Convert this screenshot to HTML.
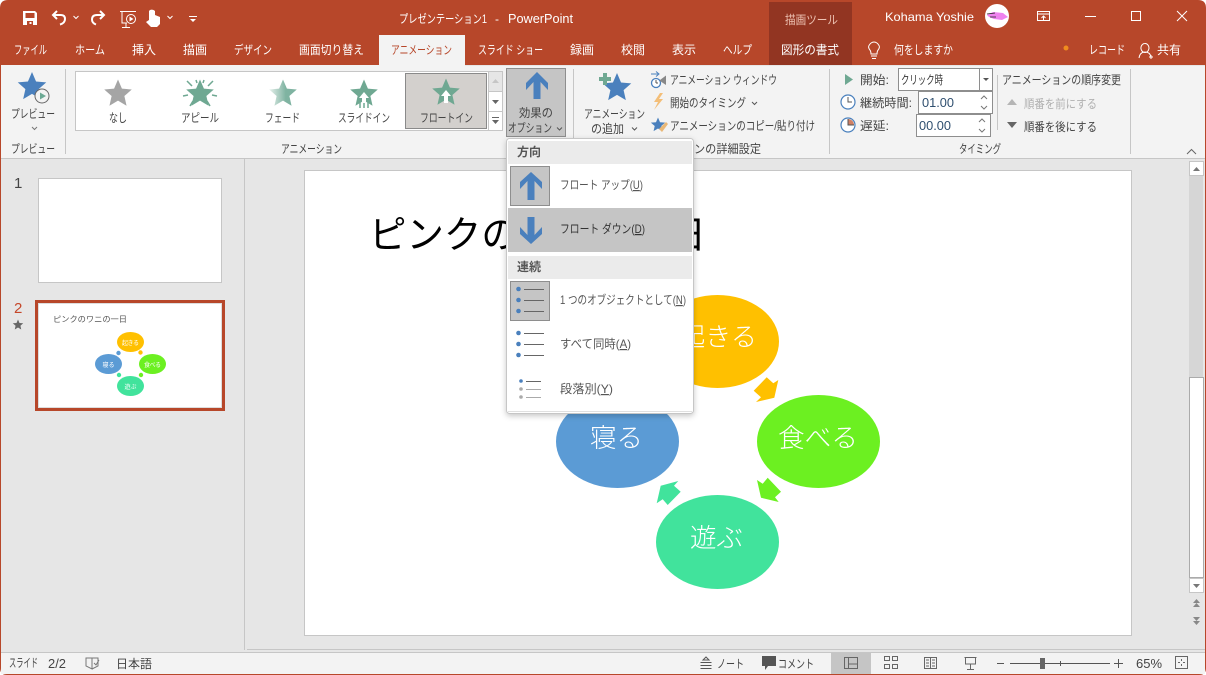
<!DOCTYPE html>
<html lang="ja"><head><meta charset="utf-8"><title>PowerPoint</title>
<style>
html,body{margin:0;padding:0;background:#fff;width:1206px;height:675px;overflow:hidden}
svg{display:block}
text{font-family:"Liberation Sans","Noto Sans CJK JP",sans-serif;font-size:12px;fill:#444;white-space:pre}
.w text,text.w{fill:#fff}
.u{text-decoration:underline}
</style></head><body>
<svg width="1206" height="675" viewBox="0 0 1206 675" xmlns="http://www.w3.org/2000/svg">
<defs>
<polygon id="s" points="0,-1 .27,-.37 .95,-.31 .44,.14 .59,.81 0,.46 -.59,.81 -.44,.14 -.95,-.31 -.27,-.37"/>
<linearGradient id="fade" x1="0" x2="1" y1="0" y2="0"><stop offset="0" stop-color="#e6f0ec"/><stop offset=".6" stop-color="#7fb3a1"/></linearGradient>
<filter id="sh" x="-10%" y="-10%" width="120%" height="120%"><feDropShadow dx="0" dy="2" stdDeviation="3" flood-color="#000" flood-opacity=".22"/></filter>
</defs>
<!-- window -->
<path d="M8 0H1198Q1206 0 1206 8V668Q1206 675 1199 675H7Q0 675 0 668V8Q0 0 8 0Z" fill="#B7472A"/>
<rect x="1" y="65" width="1204" height="609" fill="#E6E6E6"/>
<rect x="769" y="2" width="83" height="63" fill="#923522"/>
<!-- QAT -->
<path d="M23 11H35L37 13V25H23ZM25.500 13V18H34.500V13ZM27 21V25H33V21ZM29.500 22H31.500V24H29.500Z" fill="#fff" fill-rule="evenodd"/>
<g fill="none" stroke="#fff" stroke-width="2">
<path d="M54 15H61Q65 15 65 19Q65 23 60 24.500"/><path d="M57 11L53 15L57 19"/>
<path d="M103 15H97Q92 15 92 19.500Q92 23 96 24.500"/><path d="M100 11L104 15L100 19"/>
</g>
<g fill="none" stroke="#fff" stroke-width="1">
<path d="M120 11.500H136M122 12V23H127M126 23V27M122 27.500H130"/><circle cx="131" cy="19" r="4.500"/>
<path d="M73.500 16L76 18.500L78.500 16M167.500 16L170 18.500L172.500 16"/>
</g>
<path d="M129.500 16.500V21.500L133.500 19Z" fill="#fff"/>
<path d="M150 10Q153 9 155 11V15L160 17V24L157 27H151L146 22L149 20V11Z" fill="#fff"/>
<path d="M189 16H197V17H189ZM190 19H196L193 22Z" fill="#fff"/>
<!-- title text -->
<g class="w">
<text x="399" y="23" textLength="88" lengthAdjust="spacingAndGlyphs">プレゼンテーション1</text>
<text x="495" y="23">-</text>
<text x="508" y="23" textLength="65" lengthAdjust="spacingAndGlyphs" style="font-size:13px">PowerPoint</text>
<text x="785" y="24" textLength="53" lengthAdjust="spacingAndGlyphs" style="fill:#eec3b4">描画ツール</text>
<text x="885" y="21" textLength="89" lengthAdjust="spacingAndGlyphs">Kohama Yoshie</text>
</g>
<circle cx="997" cy="16" r="12" fill="#fff"/>
<path d="M987 15L993 12L1003 13L1008 17L1002 20L994 19L989 17Z" fill="#ee82ee"/>
<path d="M987 14L995 13M990 17H996" stroke="#222" stroke-width=".7" fill="none"/>
<g fill="none" stroke="#fff" stroke-width="1">
<rect x="1037.500" y="11.500" width="12" height="9"/><path d="M1037 14H1050M1043.500 20V16M1041.500 18L1043.500 16L1045.500 18"/>
<path d="M1085 16.500H1096"/><rect x="1131.500" y="11.500" width="9" height="9"/>
<path d="M1177 11L1187 21M1187 11L1177 21"/>
</g>
<!-- tabs -->
<rect x="379" y="35" width="86" height="31" fill="#F3F3F3"/>
<g class="w">
<text x="14" y="54" textLength="33" lengthAdjust="spacingAndGlyphs">ファイル</text>
<text x="75" y="54" textLength="30" lengthAdjust="spacingAndGlyphs">ホーム</text>
<text x="132" y="54" textLength="24" lengthAdjust="spacingAndGlyphs">挿入</text>
<text x="183" y="54" textLength="24" lengthAdjust="spacingAndGlyphs">描画</text>
<text x="234" y="54" textLength="38" lengthAdjust="spacingAndGlyphs">デザイン</text>
<text x="299" y="54" textLength="65" lengthAdjust="spacingAndGlyphs">画面切り替え</text>
<text x="478" y="54" textLength="65" lengthAdjust="spacingAndGlyphs">スライド ショー</text>
<text x="570" y="54" textLength="24" lengthAdjust="spacingAndGlyphs">録画</text>
<text x="621" y="54" textLength="24" lengthAdjust="spacingAndGlyphs">校閲</text>
<text x="672" y="54" textLength="24" lengthAdjust="spacingAndGlyphs">表示</text>
<text x="723" y="54" textLength="29" lengthAdjust="spacingAndGlyphs">ヘルプ</text>
<text x="781" y="54" textLength="58" lengthAdjust="spacingAndGlyphs">図形の書式</text>
<text x="894" y="54" textLength="59" lengthAdjust="spacingAndGlyphs">何をしますか</text>
<text x="1089" y="54" textLength="36" lengthAdjust="spacingAndGlyphs">レコード</text>
<text x="1157" y="54" textLength="24" lengthAdjust="spacingAndGlyphs">共有</text>
</g>
<text x="391" y="54" textLength="61" lengthAdjust="spacingAndGlyphs" style="fill:#B7472A">アニメーション</text>
<path d="M871 56H877M872 58.500H876M871 54Q871 51 869.500 49.500Q868 47 869 45.500Q871 42 874 42Q877 42 879 45.500Q880 47 878.500 49.500Q877 51 877 54Z" fill="none" stroke="#fff"/>
<circle cx="1066" cy="48" r="2.500" fill="#F08C1E"/>
<path d="M1139 58Q1140 52 1145 52Q1150 52 1151 57M1145 43.500A4 4.500 0 1 1 1144.900 43.500M1149 57H1153M1151 55V59" fill="none" stroke="#fff"/>
<!-- ribbon -->
<rect x="1" y="65" width="378" height="93" fill="#F3F3F3"/><rect x="379" y="66" width="826" height="92" fill="#F3F3F3"/>
<rect x="1" y="158" width="1204" height="1" fill="#C6C6C6"/>
<g fill="#C6C6C6"><rect x="65" y="69" width="1" height="85"/><rect x="573" y="69" width="1" height="85"/><rect x="829" y="69" width="1" height="85"/><rect x="1130" y="69" width="1" height="85"/><rect x="997" y="75" width="1" height="55"/></g>
<!-- preview -->
<use href="#s" transform="translate(32 87) scale(15)" fill="#4A80BD"/>
<circle cx="42" cy="96" r="7" fill="#F3F3F3" stroke="#666"/><path d="M40 92.500V99.500L46 96Z" fill="#6CA994"/>
<text x="11" y="118" textLength="44" lengthAdjust="spacingAndGlyphs">プレビュー</text>
<path d="M32 127L34.500 129.500L37 127" fill="none" stroke="#777"/>
<text x="11" y="153" textLength="44" lengthAdjust="spacingAndGlyphs">プレビュー</text>
<text x="281" y="153" textLength="61" lengthAdjust="spacingAndGlyphs">アニメーション</text>
<!-- gallery -->
<rect x="75.500" y="71.500" width="413" height="59" fill="#fff" stroke="#C6C6C6"/>
<rect x="405.500" y="73.500" width="81" height="55" fill="#D3D0CD" stroke="#8A8A8A"/>
<use href="#s" transform="translate(118 94) scale(14.500)" fill="#A5A5A5"/>
<use href="#s" transform="translate(200 94) scale(14.500)" fill="#6FA892"/>
<path d="M187 81L192 86M213 81L208 86M183 96L188 95M217 96L212 95M190 106L193 101M210 106L207 101M196 80L197 83M204 80L203 83" stroke="#6FA892" stroke-width="1.500" fill="none"/>
<use href="#s" transform="translate(283 94) scale(14.500)" fill="url(#fade)"/>
<use href="#s" transform="translate(364 94) scale(14.500)" fill="#6FA892"/>
<path d="M364 92L359 98H362V108H366V98H369Z" fill="#fff"/>
<path d="M360 102V108M364 103V108M368 102V108" stroke="#6FA892" stroke-width="1.500"/>
<use href="#s" transform="translate(446 93) scale(14.500)" fill="#6FA892"/>
<path d="M446 90L441 96H444V103H448V96H451Z" fill="#fff"/>
<text x="109" y="122" textLength="18" lengthAdjust="spacingAndGlyphs">なし</text>
<text x="181" y="122" textLength="38" lengthAdjust="spacingAndGlyphs">アピール</text>
<text x="265" y="122" textLength="35" lengthAdjust="spacingAndGlyphs">フェード</text>
<text x="338" y="122" textLength="52" lengthAdjust="spacingAndGlyphs">スライドイン</text>
<text x="420" y="122" textLength="53" lengthAdjust="spacingAndGlyphs">フロートイン</text>
<g fill="#fff" stroke="#C6C6C6"><rect x="488.500" y="71.500" width="14" height="20" fill="#E6E6E6"/><rect x="488.500" y="91.500" width="14" height="20"/><rect x="488.500" y="111.500" width="14" height="19"/></g>
<path d="M492 83H499L495.500 79Z" fill="#C6C6C6"/><path d="M492 100H499L495.500 104Z" fill="#666"/><path d="M492 117H499V118H492ZM492 120H499L495.500 124Z" fill="#666"/>
<!-- effect options -->
<rect x="506.500" y="68.500" width="59" height="68" fill="#C5C5C5" stroke="#8E8E8E"/>
<path d="M537 72L526 83V90L533.500 82V99H540.500V82L548 90V83Z" fill="#4A80BD"/>
<text x="519" y="117" textLength="34" lengthAdjust="spacingAndGlyphs">効果の</text>
<text x="508" y="132" textLength="44" lengthAdjust="spacingAndGlyphs">オプション</text>
<path d="M557 127.500L559.500 130L562 127.500" fill="none" stroke="#555"/>
<!-- add animation -->
<use href="#s" transform="translate(617 88) scale(15)" fill="#4A80BD"/>
<path d="M603 73H607V77H611V81H607V85H603V81H599V77H603Z" fill="#6FA892"/>
<text x="584" y="118" textLength="61" lengthAdjust="spacingAndGlyphs">アニメーション</text>
<text x="591" y="133" textLength="33" lengthAdjust="spacingAndGlyphs">の追加</text>
<path d="M632 127.500L634.500 130L637 127.500" fill="none" stroke="#555"/>
<circle cx="656" cy="83" r="4.500" fill="#fff" stroke="#4A80BD" stroke-width="1.300"/><path d="M651 74H658M656 71.500L659 74L656 76.500" stroke="#4A80BD" fill="none"/><path d="M656 83V80M656 83H658" stroke="#555" fill="none"/>
<path d="M660 80L666 75.500V85L660 81Z" fill="#888"/>
<path d="M660 93L654 102H658L654 110L663 99H659L663 93Z" fill="#F3BE78"/>
<use href="#s" transform="translate(658 125) scale(7.500)" fill="#4A80BD"/>
<path d="M659 129L666 122L668 124L662 132Z" fill="#E9B877"/>
<text x="670" y="84" textLength="107" lengthAdjust="spacingAndGlyphs">アニメーション ウィンドウ</text>
<text x="670" y="107" textLength="76" lengthAdjust="spacingAndGlyphs">開始のタイミング</text>
<path d="M752 102L754.500 104.500L757 102" fill="none" stroke="#555"/>
<text x="670" y="130" textLength="145" lengthAdjust="spacingAndGlyphs">アニメーションのコピー/貼り付け</text>
<text x="694" y="153" textLength="67" lengthAdjust="spacingAndGlyphs">ンの詳細設定</text>
<!-- timing -->
<path d="M845 74V85L853 79.500Z" fill="#6FA892"/>
<text x="860" y="84" textLength="29" lengthAdjust="spacingAndGlyphs">開始:</text>
<rect x="898.500" y="68.500" width="94" height="22" fill="#fff" stroke="#8E8E8E"/><rect x="979.500" y="68.500" width="13" height="22" fill="#fff" stroke="#8E8E8E"/>
<path d="M983 78H989L986 81Z" fill="#555"/>
<text x="901" y="84" textLength="42" lengthAdjust="spacingAndGlyphs" style="fill:#333">クリック時</text>
<circle cx="848" cy="102" r="7" fill="#fff" stroke="#4A80BD" stroke-width="1.200"/><path d="M848 97V102H852" fill="none" stroke="#555"/>
<text x="860" y="107" textLength="52" lengthAdjust="spacingAndGlyphs">継続時間:</text>
<rect x="918.500" y="91.500" width="74" height="22" fill="#fff" stroke="#8E8E8E"/>
<text x="922" y="107" textLength="32" lengthAdjust="spacingAndGlyphs" style="fill:#2f4f6f;font-size:13px">01.00</text>
<path d="M981 99L984 96L987 99M981 106L984 109L987 106" fill="none" stroke="#777"/>
<circle cx="848" cy="125" r="7" fill="#fff" stroke="#4A80BD" stroke-width="1.200"/><path d="M848 125V119A6 6 0 0 1 854 125Z" fill="#D07F64"/><path d="M848 119V125H854" fill="none" stroke="#555"/>
<text x="860" y="130" textLength="29" lengthAdjust="spacingAndGlyphs">遅延:</text>
<rect x="916.500" y="114.500" width="74" height="22" fill="#fff" stroke="#8E8E8E"/>
<text x="919" y="130" textLength="32" lengthAdjust="spacingAndGlyphs" style="fill:#2f4f6f;font-size:13px">00.00</text>
<path d="M979 122L982 119L985 122M979 129L982 132L985 129" fill="none" stroke="#777"/>
<text x="1002" y="84" textLength="119" lengthAdjust="spacingAndGlyphs">アニメーションの順序変更</text>
<path d="M1007 105H1017L1012 99Z" fill="#B5B5B5"/>
<text x="1024" y="108" textLength="73" lengthAdjust="spacingAndGlyphs" style="fill:#B0B0B0">順番を前にする</text>
<path d="M1007 122H1017L1012 128Z" fill="#666"/>
<text x="1024" y="131" textLength="73" lengthAdjust="spacingAndGlyphs">順番を後にする</text>
<text x="959" y="153" textLength="42" lengthAdjust="spacingAndGlyphs">タイミング</text>
<path d="M1187 154L1191.500 149.500L1196 154" fill="none" stroke="#666"/>
<!-- panel -->
<rect x="244" y="159" width="1" height="491" fill="#C6C6C6"/>
<text x="14" y="188" style="font-size:15px">1</text>
<rect x="38.500" y="178.500" width="183" height="104" fill="#fff" stroke="#C6C6C6"/>
<text x="14" y="313" style="font-size:15px;fill:#C5472A">2</text>
<use href="#s" transform="translate(18 325) scale(5.500)" fill="#666"/>
<rect x="36.500" y="301.500" width="187" height="108" fill="#fff" stroke="#B7472A" stroke-width="3"/>
<rect x="38.500" y="303.500" width="183" height="104" fill="none" stroke="#DDD"/>
<text x="53" y="322" textLength="74" lengthAdjust="spacingAndGlyphs" style="font-size:8px;fill:#555">ピンクのワニの一日</text>
<ellipse cx="130.500" cy="342" rx="13.500" ry="10" fill="#FFC000"/>
<ellipse cx="152.500" cy="364" rx="13.500" ry="10" fill="#6CF021"/>
<ellipse cx="130.500" cy="386" rx="13.500" ry="10" fill="#41E39C"/>
<ellipse cx="108.500" cy="364" rx="13.500" ry="10" fill="#5B9BD5"/>
<circle cx="118.500" cy="353" r="2.200" fill="#5B9BD5"/><circle cx="140.500" cy="352.500" r="2.200" fill="#FFC000"/><circle cx="141" cy="375" r="2.200" fill="#6CF021"/><circle cx="119" cy="375" r="2.200" fill="#41E39C"/>
<g class="w">
<text x="122" y="345" textLength="17" style="font-size:6px">起きる</text>
<text x="144" y="367" textLength="17" style="font-size:6px">食べる</text>
<text x="124.500" y="389" textLength="12" style="font-size:6px">遊ぶ</text>
<text x="102.500" y="367" textLength="12" style="font-size:6px">寝る</text>
</g>
<!-- slide -->
<rect x="304.500" y="170.500" width="827" height="465" fill="#fff" stroke="#C6C6C6"/>
<text x="369" y="248" textLength="337" lengthAdjust="spacingAndGlyphs" style="font-size:38px;fill:#000">ピンクのワニの一日</text>
<ellipse cx="717.500" cy="341.500" rx="61.500" ry="46.500" fill="#FFC000"/>
<ellipse cx="818.500" cy="441.500" rx="61.500" ry="46.500" fill="#6CF021"/>
<ellipse cx="717.500" cy="542" rx="61.500" ry="47" fill="#41E39C"/>
<ellipse cx="617.500" cy="441.500" rx="61.500" ry="46.500" fill="#5B9BD5"/>
<polygon points="753.700,390.700 766.700,377.300 773.300,383.300 778.300,380 774.300,397.700 756,402 761,397.300" fill="#FFC000"/>
<polygon points="767.700,477.700 781,491.700 775,497.300 778.700,502 761,497.700 757,480 762.700,483.700" fill="#6CF021"/>
<polygon points="680.700,491.700 667.700,505 662.700,499.300 656.700,503.300 660.700,485.700 678.300,481 674,485.700" fill="#41E39C"/>
<g class="w">
<text x="679" y="346" textLength="78" lengthAdjust="spacingAndGlyphs" style="font-size:26px;font-weight:300">起きる</text>
<text x="778" y="447" textLength="80" lengthAdjust="spacingAndGlyphs" style="font-size:26px;font-weight:300">食べる</text>
<text x="690" y="547" textLength="53" lengthAdjust="spacingAndGlyphs" style="font-size:26px;font-weight:300">遊ぶ</text>
<text x="590" y="447" textLength="53" lengthAdjust="spacingAndGlyphs" style="font-size:26px;font-weight:300">寝る</text>
</g>
<!-- scrollbar -->
<rect x="1189" y="161" width="14" height="431" fill="#D6D6D6"/>
<rect x="1189.500" y="161.500" width="14" height="14" fill="#fff" stroke="#C6C6C6"/>
<rect x="1189.500" y="377.500" width="14" height="200" fill="#fff" stroke="#ABABAB"/>
<rect x="1189.500" y="578.500" width="14" height="14" fill="#fff" stroke="#C6C6C6"/>
<path d="M1193 171H1200L1196.500 167Z" fill="#777"/><path d="M1193 584H1200L1196.500 588Z" fill="#777"/>
<path d="M1193 603H1200L1196.500 599ZM1193 607H1200L1196.500 603Z" fill="#888"/>
<path d="M1193 617H1200L1196.500 621ZM1193 621H1200L1196.500 625Z" fill="#888"/>
<rect x="247" y="649" width="958" height="1" fill="#C6C6C6"/>
<!-- menu -->
<rect x="506.500" y="138.500" width="187" height="275" rx="3" fill="#fff" stroke="#C6C6C6" filter="url(#sh)"/>
<rect x="508" y="141" width="184" height="23" fill="#EBEBEB"/>
<rect x="510.500" y="166.500" width="39" height="39" fill="#C5C5C5" stroke="#8E8E8E"/>
<path d="M531 172L520 182V189L527.500 181V200H534.500V181L542 189V182Z" fill="#4A80BD"/>
<rect x="508" y="208" width="184" height="44" fill="#C5C5C5"/>
<path d="M531 244L520 234V227L527.500 235V217H534.500V235L542 227V234Z" fill="#4A80BD"/>
<rect x="508" y="256" width="184" height="23" fill="#EBEBEB"/>
<rect x="510.500" y="281.500" width="39" height="39" fill="#C5C5C5" stroke="#8E8E8E"/>
<g fill="#4A80BD"><circle cx="518.500" cy="289" r="2.300"/><circle cx="518.500" cy="300" r="2.300"/><circle cx="518.500" cy="311" r="2.300"/><circle cx="518.500" cy="333" r="2.300"/><circle cx="518.500" cy="344" r="2.300"/><circle cx="518.500" cy="355" r="2.300"/><circle cx="521" cy="381" r="1.800"/></g>
<g fill="#AAA"><circle cx="521" cy="389" r="1.800"/><circle cx="521" cy="397" r="1.800"/></g>
<path d="M524 289.500H544M524 300.500H544M524 311.500H544M524 333.500H544M524 344.500H544M524 355.500H544" stroke="#666"/>
<path d="M526 381.500H541" stroke="#666"/><path d="M526 389.500H541M526 397.500H541" stroke="#AAA"/>
<rect x="508" y="411" width="184" height="1" fill="#E0E0E0"/>
<text x="517" y="156" textLength="24" lengthAdjust="spacingAndGlyphs" style="font-weight:700;fill:#555">方向</text>
<text x="517" y="271" textLength="24" lengthAdjust="spacingAndGlyphs" style="font-weight:700;fill:#555">連続</text>
<text x="560" y="189" textLength="83" lengthAdjust="spacingAndGlyphs" style="fill:#555">フロート アップ(<tspan class="u">U</tspan>)</text>
<text x="560" y="233" textLength="85" lengthAdjust="spacingAndGlyphs" style="fill:#333">フロート ダウン(<tspan class="u">D</tspan>)</text>
<text x="560" y="304" textLength="126" lengthAdjust="spacingAndGlyphs" style="fill:#555">1 つのオブジェクトとして(<tspan class="u">N</tspan>)</text>
<text x="560" y="348" textLength="71" lengthAdjust="spacingAndGlyphs" style="fill:#555">すべて同時(<tspan class="u">A</tspan>)</text>
<text x="560" y="393" textLength="53" lengthAdjust="spacingAndGlyphs" style="fill:#555">段落別(<tspan class="u">Y</tspan>)</text>
<!-- status -->
<rect x="1" y="652" width="1204" height="22" fill="#F3F3F3"/>
<rect x="1" y="652" width="1204" height="1" fill="#C6C6C6"/>
<text x="9" y="667" textLength="29" lengthAdjust="spacingAndGlyphs">スライド</text>
<text x="48" y="668" textLength="18" lengthAdjust="spacingAndGlyphs" style="font-size:13px">2/2</text>
<path d="M86 658H92V669L86 666ZM92 658H98V666L92 669M94 663L96 665L99 660" fill="none" stroke="#777"/>
<text x="116" y="668" textLength="36" lengthAdjust="spacingAndGlyphs">日本語</text>
<path d="M706 657L703 660H709ZM700.500 662.500H711.500M700.500 665.500H711.500M700.500 668.500H711.500" fill="none" stroke="#555"/>
<text x="717" y="668" textLength="27" lengthAdjust="spacingAndGlyphs">ノート</text>
<path d="M762 656H776V666H768L765 670V666H762Z" fill="#555"/>
<text x="778" y="668" textLength="36" lengthAdjust="spacingAndGlyphs">コメント</text>
<rect x="831" y="653" width="40" height="21" fill="#C5C5C5"/>
<g fill="none" stroke="#666"><rect x="844.500" y="657.500" width="13" height="11"/><path d="M848.500 658V668M849 664H857"/>
<rect x="884.500" y="656.500" width="5" height="4"/><rect x="892.500" y="656.500" width="5" height="4"/><rect x="884.500" y="664.500" width="5" height="4"/><rect x="892.500" y="664.500" width="5" height="4"/>
<path d="M924.500 657.500H936.500V668.500H924.500ZM930.500 657.500V668.500M926 660H929M926 663H929M926 666H929M932 660H935M932 663H935M932 666H935"/>
<path d="M964.500 657.500H976.500M965.500 658V664H975.500V658M970.500 664V669M967 669.500H974"/>
<rect x="1175.500" y="656.500" width="12" height="12"/><path d="M1181.500 659V661M1181.500 664V666M1178 662.500H1180M1183 662.500H1185"/>
</g>
<path d="M997 663.500H1004M1010 663.500H1110M1060.500 661V666M1114 663.500H1123M1118.500 659V668" fill="none" stroke="#555"/>
<rect x="1040" y="658" width="5" height="11" fill="#666"/>
<text x="1136" y="668" textLength="26" lengthAdjust="spacingAndGlyphs" style="font-size:13px">65%</text>
</svg>
</body></html>
